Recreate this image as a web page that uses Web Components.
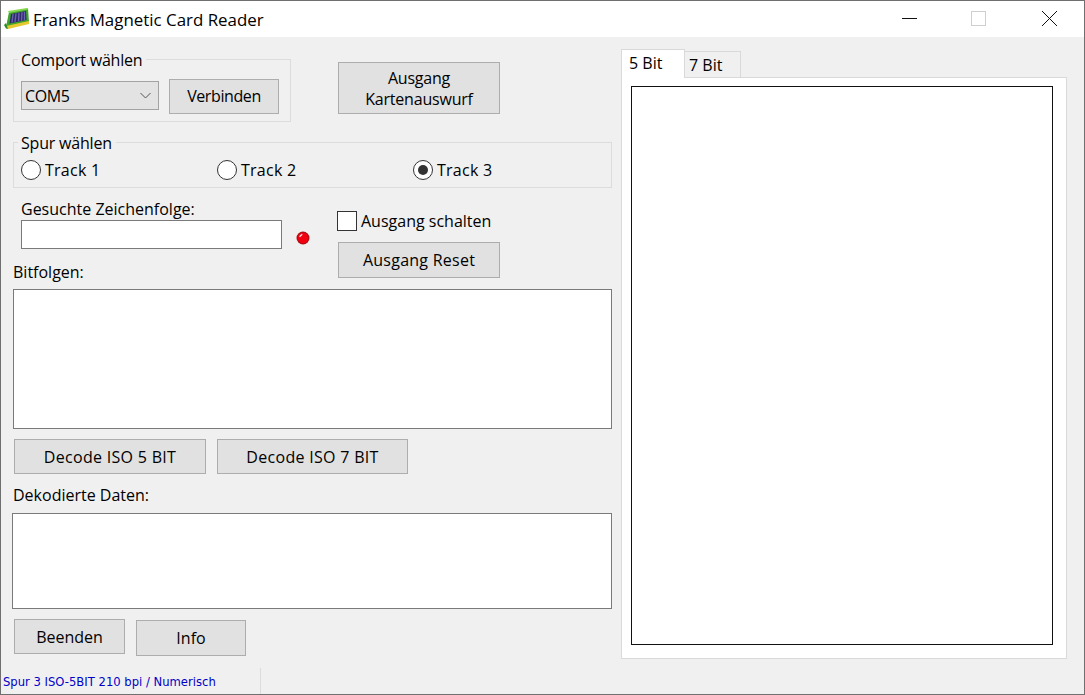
<!DOCTYPE html>
<html>
<head>
<meta charset="utf-8">
<title>Franks Magnetic Card Reader</title>
<style>
html, body { margin: 0; padding: 0; background: #f0f0f0; }
body { font: 16px "Open Sans", "Noto Sans", sans-serif; color: #000; overflow: hidden; }
.row { display: flex; align-items: flex-start; }
</style>
</head>
<body>
<app-window>
  <title-bar slot="title">Franks Magnetic Card Reader</title-bar>

  <div slot="left" style="display:flex;flex-direction:column;padding-left:12px">
    <div class="row" style="margin-top:22px;height:63px">
      <group-box label="Comport wählen" style="width:278px;height:63px;--legend-spacing:-.2px">
        <div class="row" style="padding:19px 0 0 7px;gap:10px">
          <combo-box style="margin-top:2px;letter-spacing:-.4px">COM5</combo-box>
          <push-button style="width:110px;height:35px;letter-spacing:-.4px">Verbinden</push-button>
        </div>
      </group-box>
      <push-button style="width:162px;height:52px;margin:3px 0 0 47px;padding-top:1px;letter-spacing:-.2px">Ausgang<br>Kartenauswurf</push-button>
    </div>

    <group-box label="Spur wählen" style="width:599px;height:46px;margin-top:20px;--legend-spacing:-.2px">
      <div style="display:grid;grid-template-columns:196px 196px 1fr;padding:17px 0 0 7px;letter-spacing:.25px">
        <radio-option>Track 1</radio-option>
        <radio-option>Track 2</radio-option>
        <radio-option checked>Track 3</radio-option>
      </div>
    </group-box>

    <div class="row" style="height:84px">
      <div style="display:flex;flex-direction:column;width:324px;padding:11px 0 0 8px;box-sizing:border-box">
        <field-label>Gesuchte Zeichenfolge:</field-label>
        <div class="row" style="margin-top:1px">
          <text-box style="width:261px;height:29px"></text-box>
          <led-lamp style="margin:11px 0 0 14px"></led-lamp>
        </div>
      </div>
      <div style="display:flex;flex-direction:column;padding-top:23px">
        <check-option>Ausgang schalten</check-option>
        <push-button style="width:162px;height:36px;margin:11px 0 0 1px;letter-spacing:.25px">Ausgang Reset</push-button>
      </div>
    </div>

    <field-label style="margin-top:-10px">Bitfolgen:</field-label>
    <text-box style="width:599px;height:140px;margin-top:7px"></text-box>

    <div class="row" style="gap:11px;margin:10px 0 0 1px;letter-spacing:.3px">
      <push-button style="width:192px;height:35px;padding-top:1px">Decode ISO 5 BIT</push-button>
      <push-button style="width:191px;height:35px;padding-top:1px">Decode ISO 7 BIT</push-button>
    </div>

    <field-label style="margin-top:11px">Dekodierte Daten:</field-label>
    <text-box style="width:600px;height:96px;margin:8px 0 0 -1px"></text-box>

    <div class="row" style="gap:11px;margin:10px 0 0 1px">
      <push-button style="width:111px;height:35px;padding-top:1px">Beenden</push-button>
      <push-button style="width:110px;height:36px;margin-top:1px">Info</push-button>
    </div>
  </div>

  <tab-panel slot="right"></tab-panel>
  <status-bar slot="status">Spur 3 ISO-5BIT 210 bpi / Numerisch</status-bar>
</app-window>

<script>
function shadow(el, html) {
  el.attachShadow({ mode: 'open' }).innerHTML = html;
}

class AppWindow extends HTMLElement {
  constructor() {
    super();
    shadow(this, `<style>
      :host { display: flex; flex-direction: column; width: 1085px; height: 695px; box-sizing: border-box;
        border: 1px solid #6f6f6f; background: #f0f0f0; }
      .main { flex: 1; display: flex; min-height: 0; }
      .left { width: 620px; flex: none; }
      .right { flex: 1; min-width: 0; }
    </style>
    <slot name="title"></slot>
    <div class="main">
      <div class="left"><slot name="left"></slot></div>
      <div class="right"><slot name="right"></slot></div>
    </div>
    <slot name="status"></slot>`);
  }
}

class TitleBar extends HTMLElement {
  constructor() {
    super();
    shadow(this, `<style>
      :host { display: flex; align-items: center; height: 36px; background: #fff; flex: none; }
      .icon { width: 26px; height: 22px; margin: 0 3px 0 3px; flex: none; }
      .text { font-size: 16.9px; color: #000; flex: 1; margin-top: 1px; }
      .controls { display: flex; height: 100%; flex: none; margin-right: 21px; }
      .controls svg { display: block; width: 71px; height: 36px; }
    </style>
    <svg class="icon" viewBox="0 0 26 22">
      <path d="M5 4 L24 0.500 L25 14 L2 19 Z" fill="#3ea52a"/>
      <path d="M4 3 L23 0 L24 1.500 L5 5 Z" fill="#86d84e"/>
      <path d="M7 6 L22 3 L22.500 12 L5.500 15.500 Z" fill="#2e2a66"/>
      <path d="M9 6 L8 14.500 M12 5.400 L11 14 M15 4.800 L14.500 13.300 M18 4.200 L17.500 12.700 M20.500 3.700 L20.500 12.200" stroke="#6a60b4" stroke-width="1.400"/>
      <path d="M2 18 L25 13 L25 16 L4 21 Z" fill="#e6c92e"/>
      <path d="M2 15 L4 21 L2 20.500 L0 17 Z" fill="#2f8a24"/>
    </svg>
    <span class="text"><slot></slot></span>
    <div class="controls">
      <svg viewBox="0 0 71 36"><path d="M28 17.500 H43" stroke="#111" fill="none"/></svg>
      <svg viewBox="0 0 71 36"><rect x="26.500" y="10.500" width="14" height="14" fill="none" stroke="#cfcfcf"/></svg>
      <svg style="width:47px" viewBox="0 0 47 36"><path d="M26 10 L41 25 M41 10 L26 25" stroke="#111" fill="none"/></svg>
    </div>`);
  }
}

class GroupBox extends HTMLElement {
  constructor() {
    super();
    shadow(this, `<style>
      :host { display: block; box-sizing: border-box; border: 1px solid #dcdcdc; position: relative; flex: none; }
      .legend { position: absolute; left: 4px; top: -10px; padding: 0 4px 0 3px; background: #f0f0f0; line-height: 20px; white-space: nowrap; letter-spacing: var(--legend-spacing, 0); }
    </style>
    <div class="legend">${this.getAttribute('label') || ''}</div>
    <slot></slot>`);
  }
}

class PushButton extends HTMLElement {
  constructor() {
    super();
    shadow(this, `<style>
      :host { display: flex; align-items: center; justify-content: center; box-sizing: border-box; flex: none;
        background: #e1e1e1; border: 1px solid #adadad; text-align: center; line-height: 21px; }
    </style><span><slot></slot></span>`);
  }
}

class ComboBox extends HTMLElement {
  constructor() {
    super();
    shadow(this, `<style>
      :host { display: flex; align-items: center; justify-content: space-between; box-sizing: border-box; flex: none;
        width: 138px; height: 29px; background: #e3e3e3; border: 1px solid #a3a3a3; padding: 0 7px 0 3px; }
      svg { width: 11px; height: 7px; }
    </style><span><slot></slot></span>
    <svg viewBox="0 0 11 7"><path d="M0.500 1 L5.500 6 L10.500 1" fill="none" stroke="#555"/></svg>`);
  }
}

class RadioOption extends HTMLElement {
  constructor() {
    super();
    const dot = this.hasAttribute('checked') ? '<circle cx="10" cy="10" r="5" fill="#333"/>' : '';
    shadow(this, `<style>
      :host { display: flex; align-items: center; gap: 4px; height: 20px; }
      svg { width: 20px; height: 20px; flex: none; }
    </style>
    <svg viewBox="0 0 20 20"><circle cx="10" cy="10" r="9.500" fill="#fff" stroke="#333"/>${dot}</svg>
    <span><slot></slot></span>`);
  }
}

class CheckOption extends HTMLElement {
  constructor() {
    super();
    shadow(this, `<style>
      :host { display: flex; align-items: center; gap: 4px; height: 20px; }
      i { width: 20px; height: 20px; box-sizing: border-box; border: 1px solid #333; background: #fff; flex: none; }
    </style><i></i><span><slot></slot></span>`);
  }
}

class FieldLabel extends HTMLElement {
  constructor() {
    super();
    shadow(this, `<style>:host { display: block; line-height: 20px; height: 20px; white-space: nowrap; }</style><slot></slot>`);
  }
}

class TextBox extends HTMLElement {
  constructor() {
    super();
    shadow(this, `<style>:host { display: block; box-sizing: border-box; background: #fff; border: 1px solid #7a7a7a; flex: none; }</style><slot></slot>`);
  }
}

class LedLamp extends HTMLElement {
  constructor() {
    super();
    shadow(this, `<style>:host { display: block; width: 14px; height: 14px; flex: none; }
      svg { display: block; width: 14px; height: 14px; }</style>
    <svg viewBox="0 0 14 14">
      <circle cx="7" cy="7" r="6.500" fill="#b00d14"/>
      <circle cx="7" cy="7" r="5.200" fill="#f2000f"/>
      <path d="M3.500 5.800 L6.200 3.200" stroke="#ffe0e0" stroke-width="1.400"/>
    </svg>`);
  }
}

class TabPanel extends HTMLElement {
  constructor() {
    super();
    shadow(this, `<style>
      :host { display: flex; flex-direction: column; width: 446px; margin-top: 12px; height: 610px; }
      .tabs { display: flex; align-items: flex-end; height: 29px; position: relative; z-index: 1; flex: none; }
      .tab { box-sizing: border-box; padding-left: 7px; border: 1px solid #d9d9d9; border-left: 0; }
      .on { width: 64px; height: 29px; background: #fff; border-bottom: 0; border-left: 1px solid #d9d9d9; line-height: 26px; }
      .off { width: 56px; height: 27px; background: #f0f0f0; border-left: 0; padding-left: 4px; line-height: 26px; }
      .page { flex: 1; box-sizing: border-box; background: #fff; border: 1px solid #d9d9d9; margin-top: -1px; padding: 8px 13px 13px 9px; display: flex; }
      .canvas { flex: 1; border: 1px solid #111; background: #fff; }
    </style>
    <div class="tabs"><div class="tab on">5 Bit</div><div class="tab off">7 Bit</div></div>
    <div class="page"><div class="canvas"></div></div>`);
  }
}

class StatusBar extends HTMLElement {
  constructor() {
    super();
    shadow(this, `<style>
      :host { display: flex; height: 26px; flex: none; font: 11.6px "DejaVu Sans", sans-serif; color: #0000c8; }
      .cell { width: 260px; box-sizing: border-box; padding: 7px 0 0 2px; border-right: 1px solid #dcdcdc; white-space: nowrap; overflow: hidden; }
    </style><div class="cell"><slot></slot></div>`);
  }
}

customElements.define('app-window', AppWindow);
customElements.define('title-bar', TitleBar);
customElements.define('group-box', GroupBox);
customElements.define('push-button', PushButton);
customElements.define('combo-box', ComboBox);
customElements.define('radio-option', RadioOption);
customElements.define('check-option', CheckOption);
customElements.define('field-label', FieldLabel);
customElements.define('text-box', TextBox);
customElements.define('led-lamp', LedLamp);
customElements.define('tab-panel', TabPanel);
customElements.define('status-bar', StatusBar);
</script>
</body>
</html>
